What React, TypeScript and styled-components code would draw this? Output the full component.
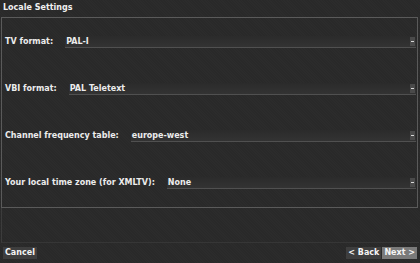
import React from 'react'
import styled, { createGlobalStyle } from 'styled-components'

const GlobalStyle = createGlobalStyle`
  html, body {
    margin: 0;
    padding: 0;
    background: #282828;
  }
  body {
    font-family: 'DejaVu Sans', 'Liberation Sans', sans-serif;
    font-weight: bold;
    color: #ececec;
  }
`

type Row = {
  label: string
  value: string
}

const rows: Row[] = [
  { label: 'TV format:', value: 'PAL-I' },
  { label: 'VBI format:', value: 'PAL Teletext' },
  { label: 'Channel frequency table:', value: 'europe-west' },
  { label: 'Your local time zone (for XMLTV):', value: 'None' },
]

const App: React.FC = () => {
  return (
    <Screen>
      <GlobalStyle />
      <Title>Locale Settings</Title>

      <OuterFrame>
        <Panel>
          {rows.map((row) => (
            <SettingRow key={row.label}>
              <Label>{row.label}</Label>
              <Combo>
                <ComboText>{row.value}</ComboText>
                <Arrow />
              </Combo>
            </SettingRow>
          ))}
        </Panel>
      </OuterFrame>

      <ButtonBar>
        <Button>Cancel</Button>
        <NavGroup>
          <Button>&lt; Back</Button>
          <Button primary>Next &gt;</Button>
        </NavGroup>
      </ButtonBar>
    </Screen>
  )
}

export default App

const Screen = styled.div`
  width: 420px;
  height: 263px;
  overflow: hidden;
  display: flex;
  flex-direction: column;
  background: repeating-linear-gradient(
      45deg,
      rgba(255, 255, 255, 0.012) 0 1px,
      transparent 1px 2px
    ),
    #292929;
`

const Title = styled.div`
  height: 17px;
  padding-left: 3px;
  font-size: 8px;
  line-height: 16px;
  color: #f0f0f0;
`

const OuterFrame = styled.div`
  margin: 0 1px 0 1px;
  height: 226px;
  box-sizing: border-box;
  border-left: 1px solid #3c3c3c;
  border-bottom: 1px solid #363636;
`

const Panel = styled.div`
  height: 191px;
  box-sizing: border-box;
  margin-left: -1px;
  margin-right: 1px;
  border: 1px solid #5a5a5a;
  padding: 18px 0 0 3px;
  display: flex;
  flex-direction: column;
  gap: 35px;
`

const SettingRow = styled.div`
  height: 12px;
  display: flex;
  align-items: center;
  gap: 12px;
`

const Label = styled.span`
  font-size: 8px;
  white-space: nowrap;
  margin-top: -1px;
`

const Combo = styled.div`
  flex: 1;
  height: 12px;
  box-sizing: border-box;
  display: flex;
  align-items: center;
  background: linear-gradient(#2b2b2b, #333333);
  border-bottom: 1px solid #505050;
  margin-right: 1px;
`

const ComboText = styled.span`
  flex: 1;
  font-size: 8px;
  padding-left: 1px;
  margin-top: -1px;
`

const Arrow = styled.div`
  width: 5px;
  height: 9px;
  background: #4a4a4a;
  position: relative;
  margin-right: 1px;

  &::after {
    content: '';
    position: absolute;
    left: 1px;
    top: 4px;
    width: 3px;
    height: 1px;
    background: #d8d8d8;
  }
`

const ButtonBar = styled.div`
  flex: 1;
  display: flex;
  align-items: center;
  justify-content: space-between;
  padding: 0 3px 0 3px;
`

const NavGroup = styled.div`
  display: flex;
  gap: 1px;
`

const Button = styled.div<{ primary?: boolean }>`
  height: 12px;
  padding: 0 2px;
  font-size: 8px;
  line-height: 12px;
  color: #f4f4f4;
  background: ${(p) => (p.primary ? '#7a7a7a' : '#3e3e3e')};
`
